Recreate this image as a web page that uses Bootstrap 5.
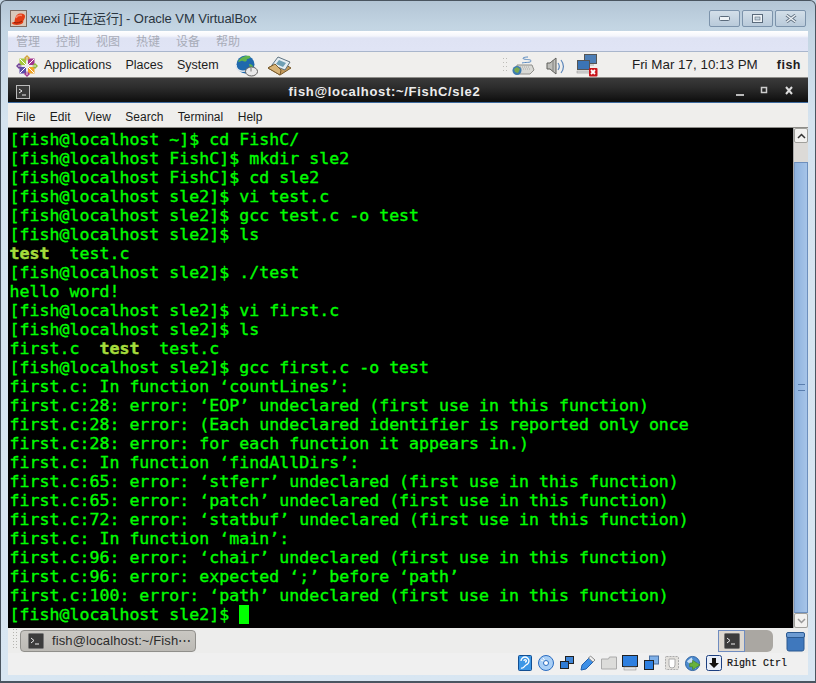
<!DOCTYPE html>
<html lang="en">
<head>
<meta charset="utf-8">
<title>xuexi - Oracle VM VirtualBox</title>
<link href="https://cdn.jsdelivr.net/npm/bootstrap@5.3.0/dist/css/bootstrap.min.css" rel="stylesheet">
<style>
html,body{margin:0;height:683px;width:816px;overflow:hidden;background:#c3d4e2;}
body{font-family:"Liberation Sans",sans-serif;color:#222;}
.aero{height:683px;width:816px;background:linear-gradient(180deg,#b3c5d5 0,#c3d5e3 26px,#d5e3ef 120px,#d8e6f2 683px);border:1px solid #4a5560;border-bottom-width:2px;border-radius:6px 6px 0 0;padding:0 7px 6px 7px;}
.aero-title{height:30px;padding-top:5px;margin-left:2px;margin-right:2px;}
.aero-title .ttxt{font-family:"Liberation Sans","Noto Sans CJK SC",sans-serif;font-size:13px;letter-spacing:-.06px;margin-left:3px;color:#2a3540;}
.wbtn{width:31px;height:17px;border:1px solid #7c93ab;border-radius:2px;background:linear-gradient(180deg,#d3dfe9,#b9cada);margin-left:2px;}
.vbmenu{height:21px;background:linear-gradient(180deg,#fff 0,#f4f5fb 5px,#dfe3f4 7px,#e0e4f5 100%);border-bottom:1px solid #a9b6cc;font-family:"Noto Sans CJK SC",sans-serif;font-size:12px;color:#a8acb8;padding-left:8px;gap:16px;line-height:19px;}
.panel{height:26px;background:#f0efed;border-bottom:1px solid #8f8e8a;font-size:12.5px;color:#1d1d1d;padding-top:2px;}
.panel .pitem{margin-right:14px;}
.pdate{font-size:13.4px;}
.tbar{height:25px;background:linear-gradient(180deg,#3a3a3a 0,#2b2b2b 10px,#161616 20px,#111 22px);border-bottom:1px solid #3d6a9e;color:#eee;font-weight:700;font-size:13px;padding-top:3px;}
.tbar .tname{flex:1;text-align:center;letter-spacing:.68px;padding-left:5px;color:#ececec;}
.tmenu{height:25px;background:#efeeec;border-bottom:1px solid #8d8c88;font-size:12px;color:#1c1c1c;padding-left:8px;padding-top:3px;}
.tmenu span{margin-right:14.500px;}
.tarea{height:500px;}
.term{flex:1;background:#000;color:#0f0;font-family:"DejaVu Sans Mono",monospace;font-size:16.6px;line-height:19px;padding:2px 0 0 1.500px;white-space:pre;font-weight:400;overflow:hidden;-webkit-text-stroke:.35px #0f0;}
.term b{color:#a4dc3c;font-weight:700;-webkit-text-stroke:.5px #a4dc3c;}
.cursor{display:inline-block;width:10px;height:19px;background:#0f0;vertical-align:top;}
.sbar{width:15px;background:#dcdad7;border-left:1px solid #aaa;}
.sbtn{height:15px;background:#f2f1ef;border:1px solid #a0a09c;border-radius:2px;}
.sgap{height:19px;}
.sthumb{flex:1;background:linear-gradient(90deg,#8eb2de,#a6c4e8);border:1px solid #6d8fbd;border-left-color:#7a9ac6;}
.grip{font-size:0;height:7px;width:7px;border-top:1px solid #5a7eae;border-bottom:1px solid #5a7eae;}
.tasks{height:25px;background:#ededec;padding-left:4px;}
.handle{width:6px;height:20px;background-image:radial-gradient(#b5b5b1 1px,transparent 1px);background-size:3px 3px;}
.taskbtn{width:176px;height:22px;background:linear-gradient(180deg,#c9c7c2,#bcbab5);border:1px solid #908f8b;border-radius:4px;font-size:13px;color:#2c2c2c;margin:2px 0 0 2px;padding-left:7px;gap:8px;letter-spacing:.1px;}
.pager{width:55px;height:22px;background:#aaa7a2;border-radius:0 6px 6px 0;margin-left:auto;margin-right:13px;margin-top:2px;}
.pageron{width:27px;height:22px;background:#ddd8d0;border:1px solid #6f8cc0;}
.trashic{margin-right:3px;margin-top:4px;}
.vbstat{height:22px;background:#f0f0f0;color:#111;padding-right:21px;padding-bottom:2px;}
.vbstat svg{margin-right:5px;flex:none;}
.stxt{font-family:"Liberation Mono",monospace;font-size:10px;font-weight:400;-webkit-text-stroke:.2px #111;}
</style>
</head>
<body>
<div class="aero d-flex flex-column">
  <div class="aero-title d-flex align-items-center">
    <svg width="17" height="17" viewBox="0 0 17 17"><rect x=".5" y=".5" width="16" height="16" fill="#d9c9bb" stroke="#7d6b60"/><path d="M1.500 13c1-1 2-1 3-1 .5-4 1.500-8 5.500-8.500 3-.5 5.500 1 5 3.500-.4 1.500-1 3-2 4 1 1 0 2.500-3 3.500-3 .8-7 .5-8.500-1.500z" fill="#e23c14"/><path d="M6 8c1-2 3-3 6-2.500" stroke="#f6876a" stroke-width="1.500" fill="none"/><path d="M4 12.500c3 1 6 0 8-1.500" stroke="#8f1f08" fill="none"/></svg>
    <span class="ttxt">xuexi [正在运行] - Oracle VM VirtualBox</span>
    <div class="ms-auto d-flex">
      <div class="wbtn d-flex align-items-center justify-content-center"><svg width="11" height="6"><rect x=".5" y=".5" width="10" height="4" rx="1" fill="#eef3f7" stroke="#5b6b7c"/></svg></div>
      <div class="wbtn d-flex align-items-center justify-content-center"><svg width="11" height="9"><rect x=".5" y=".5" width="10" height="8" fill="#eef3f7" stroke="#5b6b7c"/><rect x="3" y="3" width="5" height="3" fill="#c5d3df" stroke="#5b6b7c" stroke-width=".6"/></svg></div>
      <div class="wbtn d-flex align-items-center justify-content-center"><svg width="12" height="9"><path d="M1.500 1l9 7M10.500 1l-9 7" stroke="#5b6b7c" stroke-width="3"/><path d="M1.500 1l9 7M10.500 1l-9 7" stroke="#eef3f7" stroke-width="1.500"/></svg></div>
    </div>
  </div>
  <div class="vbmenu d-flex"><span>管理</span><span>控制</span><span>视图</span><span>热键</span><span>设备</span><span>帮助</span></div>
  <div class="panel d-flex align-items-center">
    <svg style="margin-left:8px;margin-right:6px;flex:none" width="22" height="22" viewBox="0 0 22 22"><rect x="3.500" y="3.500" width="6.500" height="6.500" fill="#a5c83c"/><rect x="12" y="3.500" width="6.500" height="6.500" fill="#a2358f"/><rect x="3.500" y="12" width="6.500" height="6.500" fill="#5b4aa8"/><rect x="12" y="12" width="6.500" height="6.500" fill="#f0a52a"/><path d="M11 0l3 3-3 3-3-3z" fill="#d4a238"/><path d="M0 11l3-3 3 3-3 3z" fill="#6f3f98"/><path d="M22 11l-3-3-3 3 3 3z" fill="#8fb93a"/><path d="M11 22l3-3-3-3-3 3z" fill="#a2358f"/><path d="M4 4l14 14M18 4L4 18" stroke="#fff" stroke-width="1"/><path d="M11 2v18M2 11h18" stroke="#e8e6e3" stroke-width="1"/></svg>
    <span class="pitem">Applications</span><span class="pitem">Places</span><span class="pitem">System</span>
    <svg style="margin-left:2px;flex:none" width="23" height="22" viewBox="0 0 23 22"><circle cx="10.500" cy="9.500" r="9" fill="#1f69ad"/><path d="M3 7c2-5 8-7 12-6 1 2-1 3-3 3 0 3-2 3-4 2s-3 1-5 1z" fill="#5fb34e"/><path d="M14 9c2 0 4 1 4 3l-3 1z" fill="#5fb34e"/><path d="M1 10c0 5 5 8 12 5" stroke="#dfe6ec" stroke-width="1.500" fill="none"/><ellipse cx="16.500" cy="16.500" rx="6" ry="4.500" fill="#e9e9e9" stroke="#5e5e5e"/><path d="M16 12.500v4" stroke="#777"/></svg>
    <svg style="margin-left:9px;flex:none" width="25" height="20" viewBox="0 0 25 20"><path d="M1 12l5-3h13l5 3-11 7z" fill="#c49a5a" stroke="#7a5c2e"/><path d="M5 9l6-8 12 5-5 8z" fill="#e6eef3" stroke="#5f7482"/><path d="M9 8l3-4 7 3-3 4z" fill="#6e9fb4"/><path d="M1 12l12 7 1-5-6-6z" fill="#d8b478" stroke="#7a5c2e"/></svg>
    <svg class="ms-auto" width="4" height="20" style="flex:none"><g fill="#bdbcb8"><rect y="2" width="1" height="1"/><rect x="3" y="2" width="1" height="1"/><rect y="6" width="1" height="1"/><rect x="3" y="6" width="1" height="1"/><rect y="10" width="1" height="1"/><rect x="3" y="10" width="1" height="1"/><rect y="14" width="1" height="1"/><rect x="3" y="14" width="1" height="1"/></g></svg>
    <svg style="margin-left:5px;flex:none" width="23" height="20" viewBox="0 0 23 20"><path d="M5 9h15l2 5-4 4H4z" fill="#d9d9d5" stroke="#8f8f8b"/><path d="M8 11h10M7 13h12" stroke="#aaa" stroke-dasharray="1 1"/><path d="M10 7c3-1 9 0 9-2s-4-1-7-2 1-2 4-2" stroke="#5a8ac0" fill="none"/><circle cx="5" cy="14.500" r="4.500" fill="#3c7cb0"/><path d="M2 13l3-2 3 2-2 4-3-1z" fill="#7aa94e"/></svg>
    <svg style="margin-left:11px;flex:none" width="19" height="20" viewBox="0 0 19 20"><path d="M1 7h3l6-5v16l-6-5H1z" fill="#bebeba" stroke="#5f5f5b"/><path d="M7 4v12" stroke="#80807c"/><path d="M12 7c1.500 2 1.500 5 0 7M15 4c3 4 3 9 0 13" stroke="#5c86ba" fill="none" stroke-width="1.200"/></svg>
    <svg style="margin-left:11px;flex:none" width="22" height="23" viewBox="0 0 22 23"><rect x="8.500" y=".5" width="12" height="9" fill="#4e7fb7" stroke="#555"/><rect x="10" y="10" width="8" height="2" fill="#ccc"/><rect x="1.500" y="6.500" width="12" height="9" fill="#3b74b5" stroke="#555"/><rect x="1" y="17" width="13" height="2" fill="#ddd" stroke="#888" stroke-width=".5"/><rect x="13" y="14" width="8.500" height="8.500" rx="1" fill="#c9141b"/><path d="M15 16l4 4M19 16l-4 4" stroke="#fff" stroke-width="1.800"/></svg>
    <span class="pdate" style="margin-left:34px">Fri Mar 17, 10:13 PM</span>
    <span class="fw-bold" style="margin-left:19px;margin-right:7px;letter-spacing:.5px">fish</span>
  </div>
  <div class="tbar d-flex align-items-center">
    <svg style="margin-left:8px;flex:none" width="14" height="14" viewBox="0 0 14 14"><rect x=".5" y=".5" width="13" height="13" fill="#3a3a3a" stroke="#bbb"/><path d="M3 4l3 2-3 2M6 10h4" stroke="#eee" fill="none"/></svg>
    <span class="tname">fish@localhost:~/FishC/sle2</span>
    <svg width="70" height="14" viewBox="0 0 70 14" style="flex:none;margin-right:4px"><rect x="2" y="9" width="8" height="2" fill="#b8b8b8"/><rect x="27.500" y="2.500" width="5" height="5" fill="none" stroke="#ccc" stroke-width="1.500"/><path d="M52 2l6 7M58 2l-6 7" stroke="#ddd" stroke-width="2"/></svg>
  </div>
  <div class="tmenu d-flex align-items-center"><span>File</span><span>Edit</span><span>View</span><span>Search</span><span>Terminal</span><span>Help</span></div>
  <div class="tarea d-flex">
<div class="term">[fish@localhost ~]$ cd FishC/
[fish@localhost FishC]$ mkdir sle2
[fish@localhost FishC]$ cd sle2
[fish@localhost sle2]$ vi test.c
[fish@localhost sle2]$ gcc test.c -o test
[fish@localhost sle2]$ ls
<b>test</b>  test.c
[fish@localhost sle2]$ ./test
hello word!
[fish@localhost sle2]$ vi first.c
[fish@localhost sle2]$ ls
first.c  <b>test</b>  test.c
[fish@localhost sle2]$ gcc first.c -o test
first.c: In function ‘countLines’:
first.c:28: error: ‘EOP’ undeclared (first use in this function)
first.c:28: error: (Each undeclared identifier is reported only once
first.c:28: error: for each function it appears in.)
first.c: In function ‘findAllDirs’:
first.c:65: error: ‘stferr’ undeclared (first use in this function)
first.c:65: error: ‘patch’ undeclared (first use in this function)
first.c:72: error: ‘statbuf’ undeclared (first use in this function)
first.c: In function ‘main’:
first.c:96: error: ‘chair’ undeclared (first use in this function)
first.c:96: error: expected ‘;’ before ‘path’
first.c:100: error: ‘path’ undeclared (first use in this function)
[fish@localhost sle2]$ <span class="cursor"></span></div>
    <div class="sbar d-flex flex-column">
      <div class="sbtn d-flex align-items-center justify-content-center"><svg width="9" height="6"><path d="M1 5l3.500-3.500L8 5" stroke="#333" stroke-width="1.500" fill="none"/></svg></div>
      <div class="sgap"></div>
      <div class="sthumb d-flex align-items-center justify-content-center"><div class="grip"></div></div>
      <div class="sbtn d-flex align-items-center justify-content-center"><svg width="9" height="6"><path d="M1 1l3.500 3.500L8 1" stroke="#999" stroke-width="1.500" fill="none"/></svg></div>
    </div>
  </div>
  <div class="tasks d-flex">
    <div class="handle"></div>
    <div class="taskbtn d-flex align-items-center">
      <svg width="16" height="16" viewBox="0 0 16 16"><rect x=".5" y=".5" width="15" height="15" rx="1" fill="#3c3c3c" stroke="#777"/><path d="M3 5l3 2.500L3 10M7 11h4" stroke="#eee" fill="none"/></svg>
      <span>fish@localhost:~/Fish⋯</span>
    </div>
    <div class="pager d-flex"><div class="pageron d-flex align-items-center justify-content-center"><svg width="16" height="16" viewBox="0 0 16 16"><rect x=".5" y=".5" width="15" height="15" rx="1" fill="#3c3c3c" stroke="#777"/><path d="M3 5l3 2.500L3 10M7 11h4" stroke="#eee" fill="none"/></svg></div></div>
    <svg class="trashic" width="19" height="20" viewBox="0 0 19 20"><path d="M1 3h17v14a2 2 0 0 1-2 2H3a2 2 0 0 1-2-2z" fill="#3f78bd" stroke="#2a5990"/><rect x=".5" y=".5" width="18" height="5" rx="1.500" fill="#6c9bd2" stroke="#2a5990"/></svg>
  </div>
  <div class="vbstat d-flex align-items-center justify-content-end">
    <svg width="14" height="16" viewBox="0 0 14 16" style="margin-right:6px"><rect x=".5" y=".5" width="13" height="15" rx="1" fill="#3d97e6" stroke="#134f92"/><path d="M3 13c3 1 3-2 5-3 2-1 3-2 3-4 0-2-2-4-4-4S3 4 3 6m3 0c0-1 1-2 2-1s0 2-1 2" stroke="#fff" fill="none" stroke-width="1.300"/></svg>
    <svg width="16" height="16" viewBox="0 0 16 16"><circle cx="8" cy="8" r="7.500" fill="#a9cff6" stroke="#2a6cc0"/><path d="M3 5l3 1.500M5 3l2 2.500" stroke="#fff"/><circle cx="8" cy="8" r="2.500" fill="#fff" stroke="#2a6cc0"/></svg>
    <svg width="16" height="16" viewBox="0 0 16 16"><rect x="6.500" y="1.500" width="8" height="7" fill="#3f86d8" stroke="#222"/><rect x="1.500" y="6.500" width="8" height="7" fill="#2f7cd6" stroke="#222"/></svg>
    <svg width="16" height="16" viewBox="0 0 16 16"><path d="M10 2l4 4-8 8-5 1 1-5z" fill="#3d8fe6" stroke="#1f5fae"/><path d="M10.500 1l4.500 4-2 2-4.500-4z" fill="#f0f0f0" stroke="#8c8c8c"/></svg>
    <svg width="16" height="14" viewBox="0 0 16 14"><path d="M.5 3h7l1-2h7v12H.500z" fill="#dcdcda" stroke="#aaa"/></svg>
    <svg width="16" height="16" viewBox="0 0 16 16"><rect x=".5" y=".5" width="15" height="11" fill="#2f80e0" stroke="#222"/><rect x="2" y="12" width="12" height="3" fill="#e4e4e4" stroke="#888" stroke-width=".5"/></svg>
    <svg width="16" height="16" viewBox="0 0 16 16"><rect x="6.500" y="1" width="9" height="8" fill="#7fb0e8" stroke="#4a6fa0"/><rect x="1.500" y="5.500" width="9" height="9" fill="#2f80e0" stroke="#222"/></svg>
    <svg width="16" height="16" viewBox="0 0 16 16"><rect x="1.500" y="1.500" width="13" height="13" rx="1" fill="#e2e0dc" stroke="#aaa" stroke-dasharray="2 1"/><path d="M5 4v6a3 3 0 0 0 6 0V4z" fill="#fff" stroke="#aaa"/></svg>
    <svg width="16" height="17" viewBox="0 0 17 17"><circle cx="8" cy="8.500" r="7.500" fill="#4d8cd0" stroke="#2a5f9f"/><path d="M2 6l5-4 2 4-4 3zM8 10l6-2-3 6z" fill="#c9e0f4"/><path d="M8 5l8 5-8 5v-3H5V8h3z" fill="#68b23c" stroke="#3f7a1e" stroke-width=".6"/></svg>
    <svg width="16" height="16" viewBox="0 0 16 16"><rect x=".5" y=".5" width="15" height="15" rx="2" fill="#e8eef8" stroke="#1c3f80"/><path d="M6 3h4v5h3l-5 5-5-5h3z" fill="#111"/></svg>
    <span class="stxt">Right Ctrl</span>
  </div>
</div>
</body>
</html>
